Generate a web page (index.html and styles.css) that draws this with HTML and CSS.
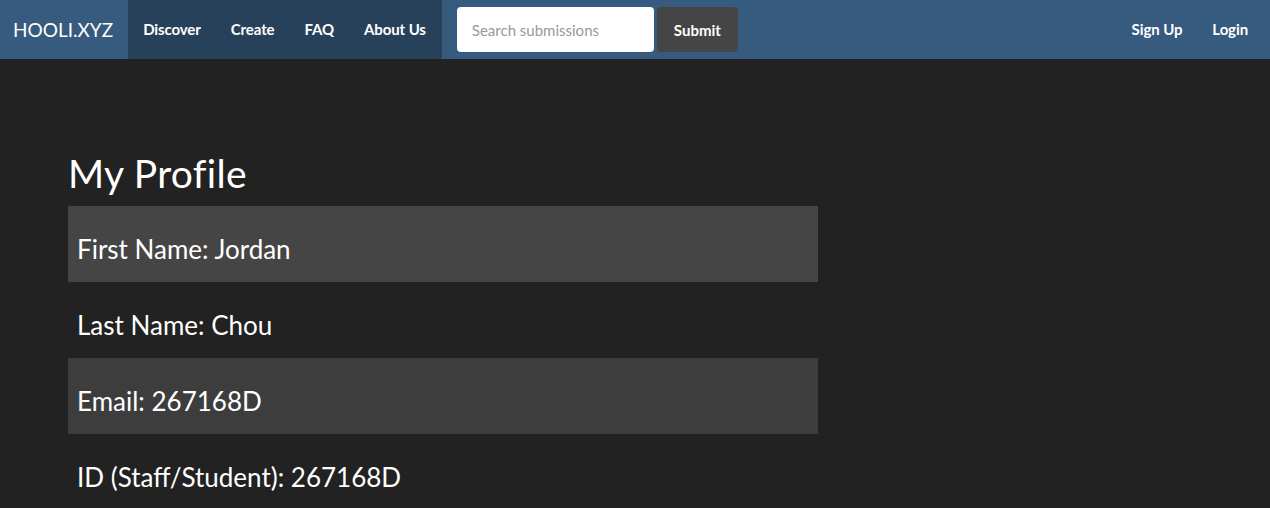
FILE: index.html
```html
<!DOCTYPE html>
<html>
<head>
<meta charset="utf-8">
<link rel="stylesheet" href="styles.css">
</head>
<body>
<nav class="navbar">
  <a class="brand">HOOLI.XYZ</a>
  <ul class="nav nav-main">
    <li><a>Discover</a></li>
    <li><a>Create</a></li>
    <li><a>FAQ</a></li>
    <li><a>About Us</a></li>
  </ul>
  <form class="search">
    <input class="search-input" type="text" placeholder="Search submissions">
    <button class="btn" type="button">Submit</button>
  </form>
  <ul class="nav nav-right">
    <li><a>Sign Up</a></li>
    <li><a>Login</a></li>
  </ul>
</nav>
<main class="content">
  <h1 class="title">My Profile</h1>
  <div class="rows">
    <div class="row row-hover"><h3>First Name: Jordan</h3></div>
    <div class="row"><h3>Last Name: Chou</h3></div>
    <div class="row row-odd"><h3>Email: 267168D</h3></div>
    <div class="row"><h3>ID (Staff/Student): 267168D</h3></div>
  </div>
</main>
</body>
</html>
```
FILE: styles.css
```css
* { box-sizing: border-box; }
html, body { margin: 0; padding: 0; }
body {
  background: #222222;
  color: #ffffff;
  font-family: Lato, "Open Sans", "Liberation Sans", sans-serif;
  font-size: 15px;
  overflow: hidden;
}
.navbar {
  display: flex;
  align-items: stretch;
  height: 59px;
  background: #375a7f;
}
.brand {
  display: flex;
  align-items: center;
  padding: 0 15px 0 13px;
  font-size: 19px;
  color: #fff;
}
.nav {
  display: flex;
  margin: 0;
  padding: 0;
  list-style: none;
}
.nav li a {
  display: block;
  padding: 0 15px;
  line-height: 59px;
  font-size: 15px;
  font-weight: 700;
  letter-spacing: -0.1px;
  color: #fff;
}
.nav-main { background: #28415b; padding-right: 1px; }
.search {
  display: flex;
  align-items: center;
  gap: 3px;
  margin-left: 15px;
}
.search-input {
  width: 197px;
  height: 45px;
  border: none;
  border-radius: 4px;
  padding: 0 15px;
  font-family: inherit;
  font-size: 15px;
  color: #464545;
  background: #fff;
  outline: none;
}
.search-input::placeholder { color: #999; }
.btn {
  height: 45px;
  width: 81px;
  border: none;
  border-radius: 4px;
  background: #464545;
  color: #fff;
  font-family: inherit;
  font-size: 15px;
  font-weight: 700;
}
.nav-right { margin-left: auto; margin-right: 7px; }
.content {
  padding: 93px 0 0 68px;
}
.title {
  margin: 0 0 11px 0;
  font-size: 39px;
  line-height: 1.1;
  font-weight: 400;
  letter-spacing: 0.3px;
}
.rows {
  width: 750px;
  display: flex;
  flex-direction: column;
}
.row {
  height: 76px;
  padding: 8px 9px;
}
.row h3 {
  margin: 21px 0 0 0;
  font-size: 26px;
  line-height: 1.1;
  font-weight: 400;
}
.row-hover { background: #464545; }
.row-odd { background: #3d3d3d; }
```
